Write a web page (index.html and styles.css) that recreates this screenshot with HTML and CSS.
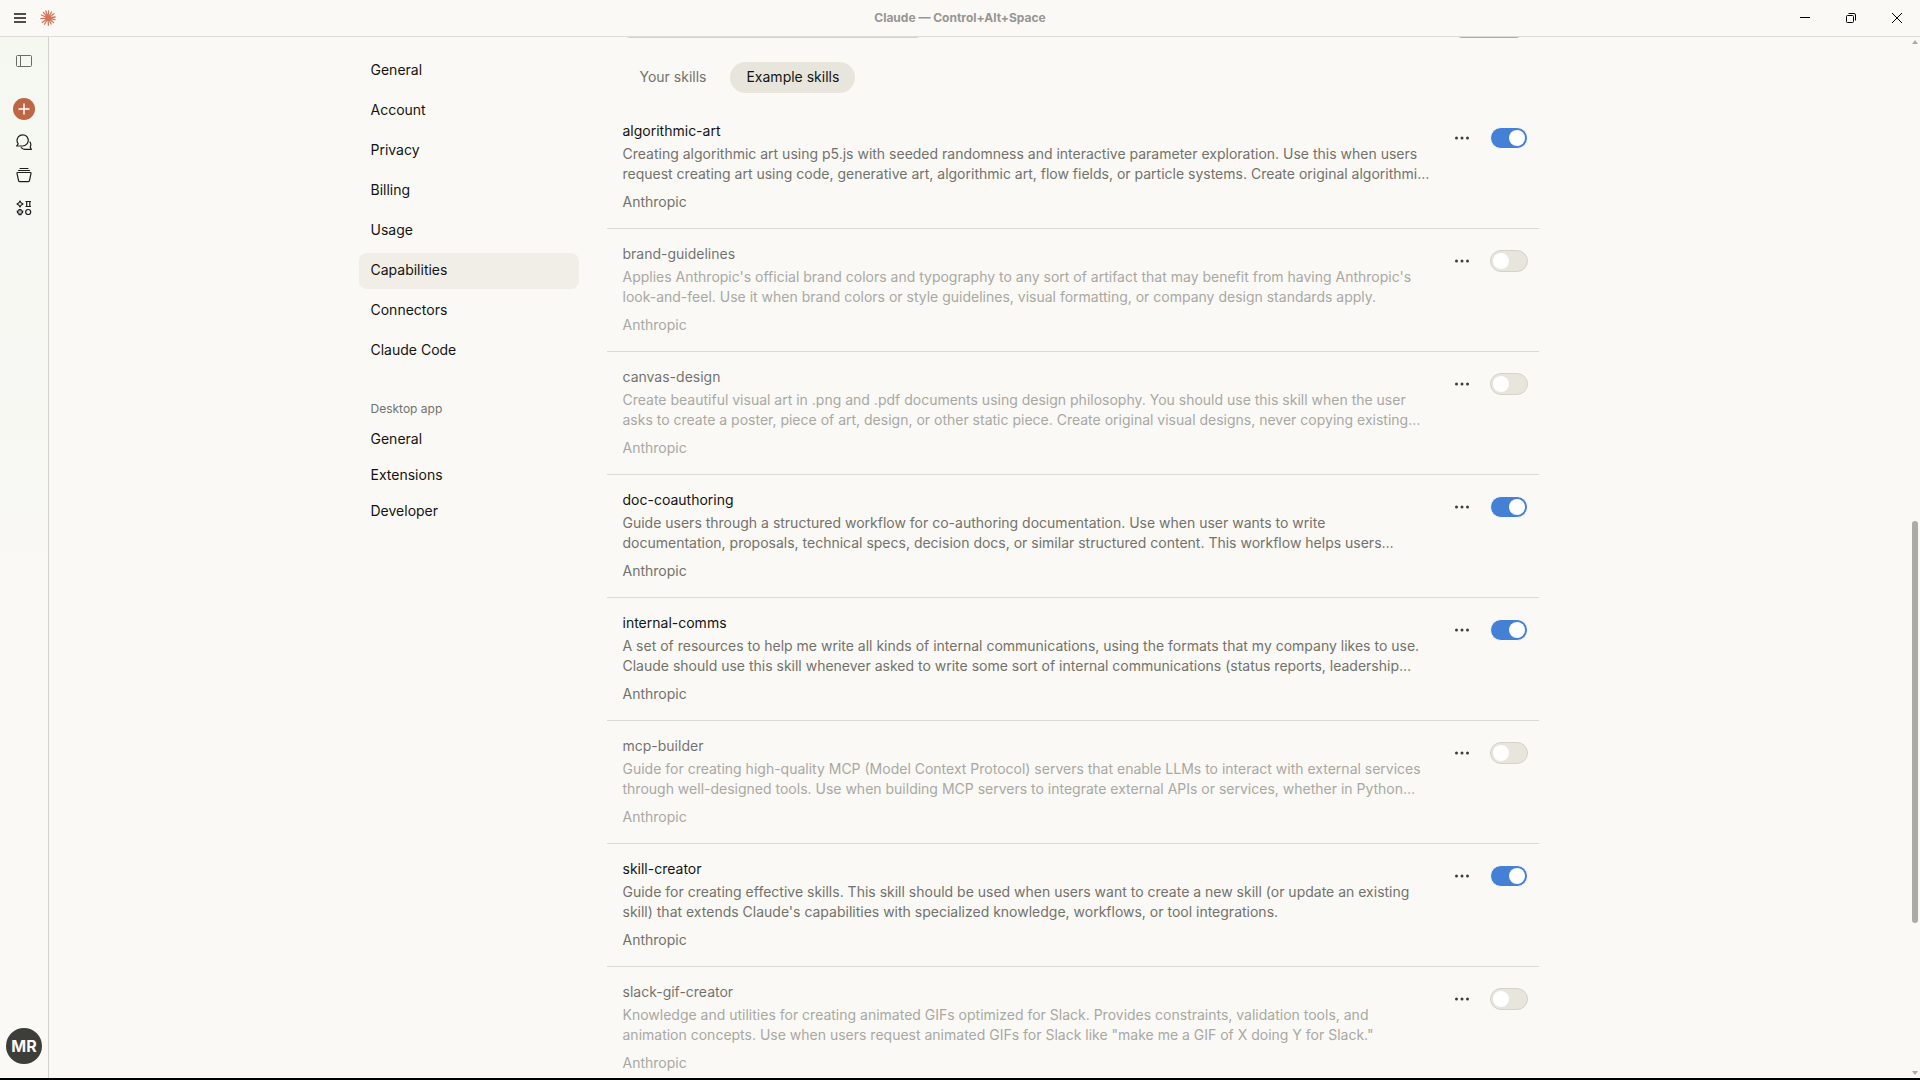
FILE: index.html
```html
<!DOCTYPE html>
<html lang="en">
<head>
  <meta charset="UTF-8">
  <meta name="viewport" content="width=device-width, initial-scale=1.0">
  <title>Claude</title>
  <link rel="stylesheet" href="styles.css">
</head>
<body>
  <header class="titlebar">
    <div class="titlebar-left">
      <button type="button" class="icon-btn" aria-label="Menu">
        <svg width="12" height="12" viewBox="0 0 12 12" stroke="#4f4e4b" stroke-width="2"><path d="M0 2h12M0 6h12M0 10h12"/></svg>
      </button>
      <svg class="logo" width="16" height="16" viewBox="0 0 16 16" stroke="#d0775a" stroke-width="1.3" stroke-linecap="round">
        <path d="M8 8L8.6.8M8 8l3.6-6M8 8l6-4.3M8 8l7.2-1M8 8l7 1.6M8 8l5.6 4.6M8 8l3.2 6M8 8l.4 7.2M8 8l-3.4 6.2M8 8l-5.8 4.4M8 8l-7.2.6M8 8L1.4 5M8 8L3.4 2.4M8 8L5.8 1"/>
        <circle cx="8" cy="8" r="1.8" fill="#d0775a"/>
      </svg>
    </div>
    <div class="titlebar-text">Claude — Control+Alt+Space</div>
    <div class="window-buttons">
      <button type="button" class="icon-btn" aria-label="Minimize">
        <svg width="10" height="10" viewBox="0 0 10 10" stroke="#000" fill="none"><path d="M0 4.500h10"/></svg>
      </button>
      <button type="button" class="icon-btn" aria-label="Restore">
        <svg width="10" height="10" viewBox="0 0 10 10" stroke="#000" fill="none"><rect x=".5" y="2.500" width="7" height="7" rx="1"/><path d="M2.500 .5H8a1.500 1.500 0 0 1 1.500 1.500v5.500"/></svg>
      </button>
      <button type="button" class="icon-btn" aria-label="Close">
        <svg width="10" height="10" viewBox="0 0 10 10" stroke="#000" fill="none"><path d="M0 0l10 10M10 0L0 10"/></svg>
      </button>
    </div>
  </header>

  <div class="app">
    <aside class="rail">
      <button type="button" class="icon-btn rail-toggle" aria-label="Toggle sidebar">
        <svg width="16" height="12" viewBox="0 0 16 12" fill="none" stroke="#6b6a66"><rect x=".5" y=".5" width="15" height="11" rx="1"/><path d="M4.500 .5v11"/></svg>
      </button>
      <button type="button" class="new-chat" aria-label="New chat">
        <svg width="12" height="12" viewBox="0 0 12 12" stroke="#fff" stroke-width="1.500"><path d="M6 .5v11M.5 6h11"/></svg>
      </button>
      <button type="button" class="icon-btn rail-btn" aria-label="Chats">
        <svg width="16" height="16" viewBox="0 0 16 16" fill="none" stroke="#1f1e1d" stroke-width="1.200" stroke-linejoin="round" stroke-linecap="round"><path d="M2.200 9.800A5.600 5.600 0 1 1 7 12H.6z"/><path d="M14 8a5 5 0 0 1 .2 5l1.200 2.400H9.500a5.300 5.300 0 0 1-4.300-1.700"/></svg>
      </button>
      <button type="button" class="icon-btn rail-btn" aria-label="Projects">
        <svg width="16" height="16" viewBox="0 0 16 16" fill="none" stroke="#1f1e1d" stroke-width="1.200" stroke-linejoin="round" stroke-linecap="round"><path d="M4 1.500h8M2.500 3.500h11M1.700 5.500h12.600q.8 0 .7.800l-1.500 7q-.3 1.400-1.500 1.400H4q-1.200 0-1.500-1.400l-1.500-7q-.1-.8.7-.8z"/></svg>
      </button>
      <button type="button" class="icon-btn rail-btn" aria-label="Artifacts">
        <svg width="16" height="16" viewBox="0 0 16 16" fill="none" stroke="#1f1e1d" stroke-width="1.200" stroke-linejoin="round"><path d="M4 1l1 1.700L7 4 5 5.300 4 7 3 5.300 1 4l2-1.300z"/><path d="M9.500 1.500h5.500M9.500 6.500h5.500M10.700 1.500v5M13.800 1.500v5"/><path d="M3 9.500h2v1.500l1.800.2-.5 1.800-1.300.2v1.500H3v-1.500l-1.300-.2-.5-1.800L3 11z"/><circle cx="12.200" cy="12" r="2.500"/></svg>
      </button>
      <button type="button" class="avatar">MR</button>
    </aside>

    <main class="content">
      <div class="settings">
        <nav class="settings-nav">
          <div class="nav-group">
            <a href="#general">General</a>
            <a href="#account">Account</a>
            <a href="#privacy">Privacy</a>
            <a href="#billing">Billing</a>
            <a href="#usage">Usage</a>
            <a href="#capabilities" class="active">Capabilities</a>
            <a href="#connectors">Connectors</a>
            <a href="#claude-code">Claude Code</a>
          </div>
          <h2>Desktop app</h2>
          <div class="nav-group desktop">
            <a href="#desktop-general">General</a>
            <a href="#extensions">Extensions</a>
            <a href="#developer">Developer</a>
          </div>
        </nav>

        <section class="skills">
          <div class="toolbar">
            <input type="search" class="search" aria-label="Search skills">
            <button type="button" class="add" aria-label="Add skill"></button>
          </div>
          <div class="tabs">
            <button type="button">Your skills</button>
            <button type="button" class="active">Example skills</button>
          </div>

          <div class="skill">
            <div class="skill-text">
              <h3>algorithmic-art</h3>
              <p>Creating algorithmic art using p5.js with seeded randomness and interactive parameter exploration. Use this when users<br>request creating art using code, generative art, algorithmic art, flow fields, or particle systems. Create original algorithmi…</p>
              <span>Anthropic</span>
            </div>
            <div class="skill-actions">
              <button type="button" class="more" aria-label="More options"><svg width="14" height="4" viewBox="0 0 14 4" fill="#3d3d3a"><circle cx="1.500" cy="2" r="1.500"/><circle cx="7" cy="2" r="1.500"/><circle cx="12.500" cy="2" r="1.500"/></svg></button>
              <input type="checkbox" class="switch" aria-label="algorithmic-art" checked>
            </div>
          </div>

          <div class="skill off">
            <div class="skill-text">
              <h3>brand-guidelines</h3>
              <p>Applies Anthropic's official brand colors and typography to any sort of artifact that may benefit from having Anthropic's<br>look-and-feel. Use it when brand colors or style guidelines, visual formatting, or company design standards apply.</p>
              <span>Anthropic</span>
            </div>
            <div class="skill-actions">
              <button type="button" class="more" aria-label="More options"><svg width="14" height="4" viewBox="0 0 14 4" fill="#3d3d3a"><circle cx="1.500" cy="2" r="1.500"/><circle cx="7" cy="2" r="1.500"/><circle cx="12.500" cy="2" r="1.500"/></svg></button>
              <input type="checkbox" class="switch" aria-label="brand-guidelines">
            </div>
          </div>

          <div class="skill off">
            <div class="skill-text">
              <h3>canvas-design</h3>
              <p>Create beautiful visual art in .png and .pdf documents using design philosophy. You should use this skill when the user<br>asks to create a poster, piece of art, design, or other static piece. Create original visual designs, never copying existing…</p>
              <span>Anthropic</span>
            </div>
            <div class="skill-actions">
              <button type="button" class="more" aria-label="More options"><svg width="14" height="4" viewBox="0 0 14 4" fill="#3d3d3a"><circle cx="1.500" cy="2" r="1.500"/><circle cx="7" cy="2" r="1.500"/><circle cx="12.500" cy="2" r="1.500"/></svg></button>
              <input type="checkbox" class="switch" aria-label="canvas-design">
            </div>
          </div>

          <div class="skill">
            <div class="skill-text">
              <h3>doc-coauthoring</h3>
              <p>Guide users through a structured workflow for co-authoring documentation. Use when user wants to write<br>documentation, proposals, technical specs, decision docs, or similar structured content. This workflow helps users…</p>
              <span>Anthropic</span>
            </div>
            <div class="skill-actions">
              <button type="button" class="more" aria-label="More options"><svg width="14" height="4" viewBox="0 0 14 4" fill="#3d3d3a"><circle cx="1.500" cy="2" r="1.500"/><circle cx="7" cy="2" r="1.500"/><circle cx="12.500" cy="2" r="1.500"/></svg></button>
              <input type="checkbox" class="switch" aria-label="doc-coauthoring" checked>
            </div>
          </div>

          <div class="skill">
            <div class="skill-text">
              <h3>internal-comms</h3>
              <p>A set of resources to help me write all kinds of internal communications, using the formats that my company likes to use.<br>Claude should use this skill whenever asked to write some sort of internal communications (status reports, leadership…</p>
              <span>Anthropic</span>
            </div>
            <div class="skill-actions">
              <button type="button" class="more" aria-label="More options"><svg width="14" height="4" viewBox="0 0 14 4" fill="#3d3d3a"><circle cx="1.500" cy="2" r="1.500"/><circle cx="7" cy="2" r="1.500"/><circle cx="12.500" cy="2" r="1.500"/></svg></button>
              <input type="checkbox" class="switch" aria-label="internal-comms" checked>
            </div>
          </div>

          <div class="skill off">
            <div class="skill-text">
              <h3>mcp-builder</h3>
              <p>Guide for creating high-quality MCP (Model Context Protocol) servers that enable LLMs to interact with external services<br>through well-designed tools. Use when building MCP servers to integrate external APIs or services, whether in Python…</p>
              <span>Anthropic</span>
            </div>
            <div class="skill-actions">
              <button type="button" class="more" aria-label="More options"><svg width="14" height="4" viewBox="0 0 14 4" fill="#3d3d3a"><circle cx="1.500" cy="2" r="1.500"/><circle cx="7" cy="2" r="1.500"/><circle cx="12.500" cy="2" r="1.500"/></svg></button>
              <input type="checkbox" class="switch" aria-label="mcp-builder">
            </div>
          </div>

          <div class="skill">
            <div class="skill-text">
              <h3>skill-creator</h3>
              <p>Guide for creating effective skills. This skill should be used when users want to create a new skill (or update an existing<br>skill) that extends Claude's capabilities with specialized knowledge, workflows, or tool integrations.</p>
              <span>Anthropic</span>
            </div>
            <div class="skill-actions">
              <button type="button" class="more" aria-label="More options"><svg width="14" height="4" viewBox="0 0 14 4" fill="#3d3d3a"><circle cx="1.500" cy="2" r="1.500"/><circle cx="7" cy="2" r="1.500"/><circle cx="12.500" cy="2" r="1.500"/></svg></button>
              <input type="checkbox" class="switch" aria-label="skill-creator" checked>
            </div>
          </div>

          <div class="skill off">
            <div class="skill-text">
              <h3>slack-gif-creator</h3>
              <p>Knowledge and utilities for creating animated GIFs optimized for Slack. Provides constraints, validation tools, and<br>animation concepts. Use when users request animated GIFs for Slack like "make me a GIF of X doing Y for Slack."</p>
              <span>Anthropic</span>
            </div>
            <div class="skill-actions">
              <button type="button" class="more" aria-label="More options"><svg width="14" height="4" viewBox="0 0 14 4" fill="#3d3d3a"><circle cx="1.500" cy="2" r="1.500"/><circle cx="7" cy="2" r="1.500"/><circle cx="12.500" cy="2" r="1.500"/></svg></button>
              <input type="checkbox" class="switch" aria-label="slack-gif-creator">
            </div>
          </div>
        </section>
      </div>

      <div class="scrollbar">
        <svg width="6" height="4" viewBox="0 0 6 4" fill="#acaba6"><path d="M3 0l3 4H0z"/></svg>
        <div class="track"><div class="thumb"></div></div>
        <svg width="6" height="4" viewBox="0 0 6 4" fill="#acaba6"><path d="M0 0h6L3 4z"/></svg>
      </div>
    </main>
  </div>
</body>
</html>
```
FILE: styles.css
```css
* {
  box-sizing: border-box;
}
body {
  margin: 0;
  height: 100vh;
  display: flex;
  flex-direction: column;
  overflow: hidden;
  border-bottom: 2px solid #000;
  background: #faf9f5;
  color: #141413;
  font-family: Inter, "Liberation Sans", sans-serif;
  font-size: 14px;
  line-height: 20px;
}
button {
  padding: 0;
  border: none;
  background: none;
  color: inherit;
  font: inherit;
  cursor: pointer;
}
.icon-btn {
  display: flex;
  align-items: center;
  justify-content: center;
}

/* title bar */
.titlebar {
  flex: none;
  height: 37px;
  display: grid;
  grid-template-columns: 1fr auto 1fr;
  align-items: center;
  border-bottom: 1px solid #dddcd8;
}
.titlebar-left {
  display: flex;
  align-items: center;
  gap: 14px;
  padding-left: 14px;
}
.titlebar-text {
  color: #979692;
  font-size: 12px;
  font-weight: 700;
}
.window-buttons {
  display: flex;
  justify-content: flex-end;
}
.window-buttons .icon-btn {
  width: 46px;
  height: 36px;
}

/* left rail */
.app {
  flex: 1;
  min-height: 0;
  display: flex;
}
.rail {
  width: 49px;
  flex: none;
  display: flex;
  flex-direction: column;
  align-items: center;
  padding: 18px 0 14px;
  border-right: 1px solid #d3d2cd;
  background: linear-gradient(#f5f7f1, #faf9f5 60%);
}
.rail-toggle {
  margin-bottom: 31px;
}
.new-chat {
  width: 22px;
  height: 22px;
  margin-bottom: 5px;
  display: flex;
  align-items: center;
  justify-content: center;
  border-radius: 50%;
  background: #bd6544;
}
.rail-btn {
  width: 32px;
  height: 33px;
}
.avatar {
  width: 36px;
  height: 36px;
  margin-top: auto;
  border-radius: 50%;
  background: #3d3d39;
  color: #faf9f5;
  font-size: 16px;
  font-weight: 700;
}

/* settings */
.content {
  position: relative;
  flex: 1;
  overflow: hidden;
}
.settings {
  max-width: 1280px;
  margin: 0 auto;
  padding: 0 86px 0 14px;
  display: grid;
  grid-template-columns: 220px 1fr;
  gap: 28px;
}
.settings-nav {
  padding-top: 16px;
}
.nav-group {
  display: flex;
  flex-direction: column;
  gap: 4px;
}
.nav-group.desktop {
  gap: 0;
}
.nav-group a {
  padding: 7px 12px 9px;
  border-radius: 8px;
  color: #141413;
  text-decoration: none;
}
.nav-group a.active {
  background: #f0eee6;
}
.settings-nav h2 {
  margin: 30px 0 3px;
  padding-left: 12px;
  color: #73726c;
  font-size: 12px;
  font-weight: 400;
}

/* skills list */
.toolbar {
  height: 1px;
  display: flex;
  justify-content: space-between;
  align-items: flex-end;
  overflow: hidden;
  padding: 0 15px;
}
.search,
.add {
  flex: none;
  height: 32px;
  border: 1px solid #d3d2cd;
  border-radius: 8px;
  background: #faf9f5;
}
.search {
  width: 302px;
}
.add {
  width: 70px;
  border-color: #acaba6;
}
.tabs {
  display: flex;
  gap: 8px;
  padding: 24px 17px 13px;
}
.tabs button {
  height: 31px;
  padding: 0 16px 2px;
  border-radius: 16px;
  color: #73726c;
}
.tabs .active {
  background: #e8e6dc;
  color: #141413;
}
.skill {
  display: flex;
  justify-content: space-between;
  padding: 15px 11px 16px 16px;
  border-bottom: 1px solid #dbdad5;
}
.skill h3,
.skill p {
  margin: 0;
  font-size: 14px;
  font-weight: 400;
}
.skill p {
  margin: 3px 0 8px;
  white-space: nowrap;
}
.skill p,
.skill span {
  color: #73726c;
}
.skill.off .skill-text {
  opacity: 0.6;
}
.skill-actions {
  height: 34px;
  display: flex;
  align-items: center;
  gap: 12px;
}
.more {
  width: 32px;
  height: 32px;
  display: flex;
  align-items: center;
  justify-content: center;
}
.switch {
  appearance: none;
  width: 38px;
  height: 22px;
  margin: 0;
  padding: 2px;
  display: flex;
  border: 1px solid #d3d2cb;
  border-radius: 11px;
  background: #e8e6dc;
}
.switch::before {
  content: "";
  width: 16px;
  height: 16px;
  border-radius: 50%;
  background: #fff;
}
.switch:checked {
  justify-content: flex-end;
  border-color: #faf9f5;
  background: #4380d6;
}

/* scrollbar over the page edge */
.scrollbar {
  position: absolute;
  top: 0;
  right: 2px;
  bottom: 0;
  width: 6px;
  display: flex;
  flex-direction: column;
  justify-content: space-between;
  padding: 3px 0;
}
.track {
  flex: 1;
  padding-top: 477px;
}
.thumb {
  height: 73%;
  border-radius: 3px;
  background: #acaba6;
}
```
